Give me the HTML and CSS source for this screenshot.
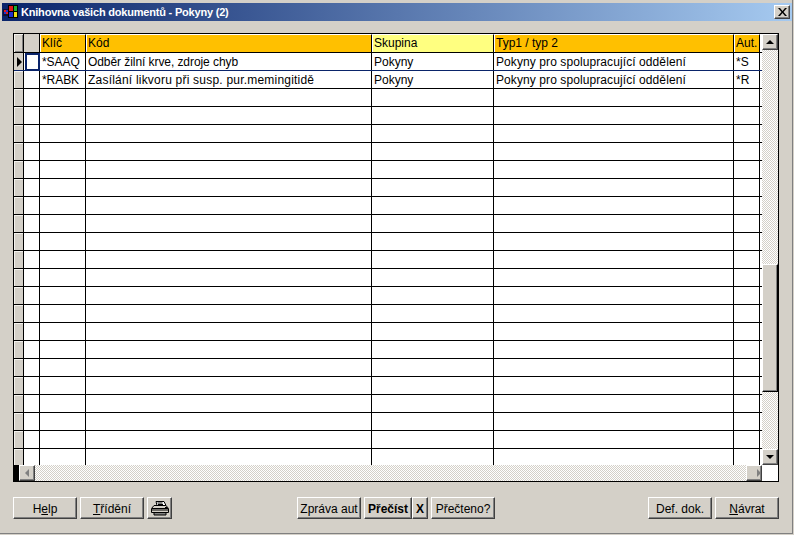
FILE: index.html
```html
<!DOCTYPE html>
<html lang="cs">
<head>
<meta charset="utf-8">
<title>Knihovna vašich dokumentů</title>
<link rel="stylesheet" href="styles.css">
</head>
<body>
<div class="window">
  <div class="titlebar">
    <svg class="logo" width="16" height="16" viewBox="0 0 16 16"><rect width="16" height="16" fill="#0a246a"/><path d="M0 5h6v7H0z" fill="#101030"/><path d="M1 6h2v2H1zM3 8h2v2H3z" fill="#e01818"/><path d="M3 6h2v2H3zM1 8h2v2H1z" fill="#2030d0"/><path d="M5 1h10v13H5z" fill="#000"/><path d="M6 2h4v5H6z" fill="#e01818"/><path d="M11 2h3v5h-3z" fill="#18b030"/><path d="M6 8h4v5H6z" fill="#2030d0"/><path d="M11 8h3v5h-3z" fill="#f0e010"/></svg>
    <span class="title">Knihovna vašich dokumentů - Pokyny (2)</span>
    <button class="close" type="button"><svg width="9" height="8" viewBox="0 0 9 8"><path d="M0 0h2l2.500 3L7 0h2L5.500 4 9 8H7L4.500 5 2 8H0l3.500-4z" fill="#000"/></svg></button>
  </div>
  <div class="grid">
    <div class="grid-main">
      <div class="rows">
        <div class="row head"><div class="ind"></div><div class="sel"></div><div class="hc">Klíč</div><div class="hc">Kód</div><div class="hc active">Skupina</div><div class="hc">Typ1 / typ 2</div><div class="hc">Aut.</div><div class="end"></div></div>
        <div class="row current"><div class="ind"><span class="arrow"></span></div><div class="sel"><div class="focus"></div></div><div class="c tight">*SAAQ</div><div class="c tight">Odběr žilní krve, zdroje chyb</div><div class="c">Pokyny</div><div class="c loose">Pokyny pro spolupracující oddělení</div><div class="c">*S</div><div class="end"></div></div>
        <div class="row"><div class="ind"></div><div class="sel"></div><div class="c tight">*RABK</div><div class="c wide">Zasílání likvoru při susp. pur.memingitidě</div><div class="c">Pokyny</div><div class="c loose">Pokyny pro spolupracující oddělení</div><div class="c">*R</div><div class="end"></div></div>
        <div class="row"><div class="ind"></div><div class="sel"></div><div class="c"></div><div class="c"></div><div class="c"></div><div class="c"></div><div class="c"></div><div class="end"></div></div>
        <div class="row"><div class="ind"></div><div class="sel"></div><div class="c"></div><div class="c"></div><div class="c"></div><div class="c"></div><div class="c"></div><div class="end"></div></div>
        <div class="row"><div class="ind"></div><div class="sel"></div><div class="c"></div><div class="c"></div><div class="c"></div><div class="c"></div><div class="c"></div><div class="end"></div></div>
        <div class="row"><div class="ind"></div><div class="sel"></div><div class="c"></div><div class="c"></div><div class="c"></div><div class="c"></div><div class="c"></div><div class="end"></div></div>
        <div class="row"><div class="ind"></div><div class="sel"></div><div class="c"></div><div class="c"></div><div class="c"></div><div class="c"></div><div class="c"></div><div class="end"></div></div>
        <div class="row"><div class="ind"></div><div class="sel"></div><div class="c"></div><div class="c"></div><div class="c"></div><div class="c"></div><div class="c"></div><div class="end"></div></div>
        <div class="row"><div class="ind"></div><div class="sel"></div><div class="c"></div><div class="c"></div><div class="c"></div><div class="c"></div><div class="c"></div><div class="end"></div></div>
        <div class="row"><div class="ind"></div><div class="sel"></div><div class="c"></div><div class="c"></div><div class="c"></div><div class="c"></div><div class="c"></div><div class="end"></div></div>
        <div class="row"><div class="ind"></div><div class="sel"></div><div class="c"></div><div class="c"></div><div class="c"></div><div class="c"></div><div class="c"></div><div class="end"></div></div>
        <div class="row"><div class="ind"></div><div class="sel"></div><div class="c"></div><div class="c"></div><div class="c"></div><div class="c"></div><div class="c"></div><div class="end"></div></div>
        <div class="row"><div class="ind"></div><div class="sel"></div><div class="c"></div><div class="c"></div><div class="c"></div><div class="c"></div><div class="c"></div><div class="end"></div></div>
        <div class="row"><div class="ind"></div><div class="sel"></div><div class="c"></div><div class="c"></div><div class="c"></div><div class="c"></div><div class="c"></div><div class="end"></div></div>
        <div class="row"><div class="ind"></div><div class="sel"></div><div class="c"></div><div class="c"></div><div class="c"></div><div class="c"></div><div class="c"></div><div class="end"></div></div>
        <div class="row"><div class="ind"></div><div class="sel"></div><div class="c"></div><div class="c"></div><div class="c"></div><div class="c"></div><div class="c"></div><div class="end"></div></div>
        <div class="row"><div class="ind"></div><div class="sel"></div><div class="c"></div><div class="c"></div><div class="c"></div><div class="c"></div><div class="c"></div><div class="end"></div></div>
        <div class="row"><div class="ind"></div><div class="sel"></div><div class="c"></div><div class="c"></div><div class="c"></div><div class="c"></div><div class="c"></div><div class="end"></div></div>
        <div class="row"><div class="ind"></div><div class="sel"></div><div class="c"></div><div class="c"></div><div class="c"></div><div class="c"></div><div class="c"></div><div class="end"></div></div>
        <div class="row"><div class="ind"></div><div class="sel"></div><div class="c"></div><div class="c"></div><div class="c"></div><div class="c"></div><div class="c"></div><div class="end"></div></div>
        <div class="row"><div class="ind"></div><div class="sel"></div><div class="c"></div><div class="c"></div><div class="c"></div><div class="c"></div><div class="c"></div><div class="end"></div></div>
        <div class="row"><div class="ind"></div><div class="sel"></div><div class="c"></div><div class="c"></div><div class="c"></div><div class="c"></div><div class="c"></div><div class="end"></div></div>
        <div class="row"><div class="ind"></div><div class="sel"></div><div class="c"></div><div class="c"></div><div class="c"></div><div class="c"></div><div class="c"></div><div class="end"></div></div>
      </div>
      <div class="vscroll">
        <div class="sb-btn"><span class="tri up"></span></div>
        <div class="track t1"></div>
        <div class="thumb"></div>
        <div class="track"></div>
        <div class="sb-btn"><span class="tri down"></span></div>
      </div>
    </div>
    <div class="hscroll">
      <div class="hs-black"></div>
      <div class="sb-btn"><span class="tri left"></span></div>
      <div class="track"></div>
      <div class="sb-btn"><span class="tri right"></span></div>
      <div class="corner"></div>
    </div>
  </div>
  <div class="footer">
    <button class="btn w64" type="button">H<u>e</u>lp</button>
    <button class="btn w64" type="button"><u>T</u>řídění</button>
    <button class="btn print" type="button"><svg width="18" height="15" viewBox="0 0 18 15"><path d="M5 .5h8l2 4h-9z" fill="#fff" stroke="#000"/><path d="M6.500 2h5M7 3.500h5" stroke="#000"/><path d="M3 4.500h12l2.500 3v4h-17v-4z" fill="#d4d0c8" stroke="#000"/><path d="M1 7.500h16M1 9h16" stroke="#000"/><path d="M3 11.500h12v2.500H3z" fill="#808080" stroke="#000"/><path d="M14 6h2v1h-2z" fill="#000"/></svg></button>
    <button class="btn w64 mid" type="button">Zpráva aut</button>
    <button class="btn strong w48" type="button">Přečíst</button>
    <button class="btn strong w16" type="button">X</button>
    <button class="btn w64 gap" type="button">Přečteno?</button>
    <button class="btn w64 right" type="button">Def. dok.</button>
    <button class="btn w64" type="button"><u>N</u>ávrat</button>
  </div>
</div>
</body>
</html>
```
FILE: styles.css
```css
* { box-sizing: border-box; }
html, body { margin: 0; padding: 0; background: #d4d0c8; }
body { width: 794px; height: 535px; overflow: hidden; font: 12px "Liberation Sans", Arial, sans-serif; color: #000; }
.window { width: 793px; height: 534px; border-right: 1px solid #808080; border-bottom: 1px solid #808080; padding-top: 3px; display: flex; flex-direction: column; }
.titlebar { height: 18px; margin: 0 0 0 2px; background: linear-gradient(90deg, #0a246a, #a6caf0); display: flex; align-items: center; padding: 0 2px 0 1px; color: #fff; }
.logo { flex: none; }
.title { font-weight: bold; font-size: 11px; letter-spacing: -0.2px; margin-left: 2px; white-space: nowrap; }
.close { margin-left: auto; width: 16px; height: 14px; padding: 0; display: flex; align-items: center; justify-content: center; background: #d4d0c8; border: 1px solid; border-color: #fff #404040 #404040 #fff; box-shadow: inset -1px -1px #808080; }
.grid { margin: 12px 0 0 13px; width: 766px; height: 449px; border: 1px solid #000; display: flex; flex-direction: column; flex: none; }
.grid-main { display: flex; height: 431px; }
.rows { width: 748px; overflow: hidden; background: #fff; flex: none; }
.row { display: grid; grid-template-columns: 10px 16px 46px 286px 122px 240px 26px 2px; height: 18px; border-bottom: 1px solid #000; }
.row.head { height: 19px; }
.row.current { border-bottom-color: #0a246a; }
.row > div { min-width: 0; white-space: nowrap; overflow: hidden; }
.ind { background: #d4d0c8; border-right: 1px solid #000; box-shadow: inset 1px 1px #f4f2ee; display: flex; align-items: center; justify-content: flex-end; }
.head .ind { box-shadow: inset 1px 1px #f4f2ee, inset -1px -1px #808080; }
.row.current .ind { box-shadow: none; }
.arrow { width: 0; height: 0; border-style: solid; border-width: 5px 0 5px 5px; border-color: transparent transparent transparent #000; margin-right: 1px; }
.sel { background: #fff; border-right: 1px solid #000; }
.head .sel { background: #d4d0c8; }
.focus { height: 100%; margin-left: 1px; border: 2px solid #0a246a; border-right-width: 1px; border-bottom-width: 1px; background: #fff; }
.row.current .sel { border-right-color: #0a246a; }
.hc { background: #ffc000; border-right: 1px solid #000; border-left: 1px solid #fff; border-top: 1px solid #fff; padding-left: 1px; line-height: 17px; }
.hc.active { background: #ffff80; }
.c { border-right: 1px solid #000; padding-left: 2px; line-height: 19px; background: #fff; }
.c.tight { letter-spacing: -0.07px; }
.c.loose { letter-spacing: 0.09px; }
.c.wide { letter-spacing: 0.21px; }
.end { background: #fff; }
.track { flex: 1; background: conic-gradient(#fff 25%, #d4d0c8 0 50%, #fff 0 75%, #d4d0c8 0) 0 0 / 2px 2px; }
.vscroll { width: 16px; display: flex; flex-direction: column; flex: none; }
.track.t1 { flex: none; height: 214px; }
.thumb { height: 128px; flex: none; background: #d4d0c8; border: 1px solid; border-color: #fff #000 #000 #fff; box-shadow: inset -1px -1px #808080; }
.sb-btn { width: 16px; height: 16px; flex: none; background: #d4d0c8; border: 1px solid; border-color: #fff #404040 #404040 #fff; box-shadow: inset -1px -1px #808080; display: flex; align-items: center; justify-content: center; }
.tri { width: 0; height: 0; border-style: solid; border-color: transparent; }
.tri.up { border-width: 0 4px 4px; border-bottom-color: #000; }
.tri.down { border-width: 4px 4px 0; border-top-color: #000; }
.tri.left { border-width: 4px 4px 4px 0; border-right-color: #808080; }
.tri.right { border-width: 4px 0 4px 4px; border-left-color: #808080; }
.hscroll { height: 16px; display: flex; flex: none; }
.hs-black { width: 5px; background: #000; flex: none; }
.corner { width: 16px; background: #fff; flex: none; }
.footer { display: flex; margin: 15px 0 0 13px; width: 766px; }
.btn { height: 22px; padding: 1px 0 0; font: 12px "Liberation Sans", Arial, sans-serif; color: #000; background: #d4d0c8; border: 1px solid; border-color: #fff #404040 #404040 #fff; box-shadow: inset -1px -1px #808080; display: flex; align-items: center; justify-content: center; margin-right: 3px; }
.w64 { width: 64px; }
.w48 { width: 48px; margin-right: 0; }
.w16 { width: 16px; margin-right: 3px; }
.print { width: 25px; margin-right: 0; padding: 0; }
.mid { margin-left: 125px; }
.strong { font-weight: bold; }
.gap { margin-right: 0; }
.right { margin-left: auto; }
.btn:last-child { margin-right: 0; }
```
